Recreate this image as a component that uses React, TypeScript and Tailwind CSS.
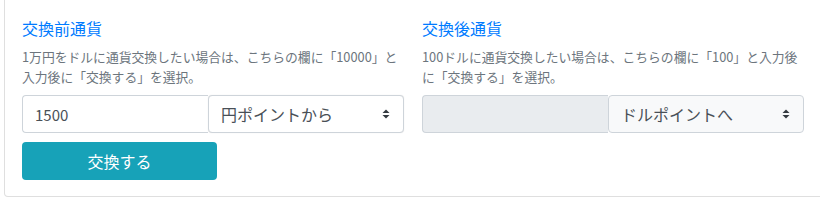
const SelectArrows = () => (
  <svg width="8" height="12" viewBox="0 0 8 12" className="shrink-0">
    <path d="M4 1.5 L7.5 5 H0.5 Z" fill="#343a40" />
    <path d="M4 10.5 L7.5 7 H0.5 Z" fill="#343a40" />
  </svg>
);

interface ColumnProps {
  title: string;
  description: string;
  value: string;
  disabled?: boolean;
  option: string;
  showButton?: boolean;
}

const Column = ({ title, description, value, disabled, option, showButton }: ColumnProps) => (
  <div className="w-[382px] shrink-0">
    <h3 className="text-[16px] leading-6 text-[#007bff] font-normal">{title}</h3>
    <p className="mt-[7px] text-[12.8px] leading-5 text-[#6c757d]">{description}</p>
    <div className="mt-2 flex h-[38px]">
      <input
        className={
          disabled
            ? 'w-[186px] h-full border border-[#ced4da] border-r-0 rounded-l bg-[#e9ecef] px-3 text-[16px] text-[#495057] outline-none'
            : 'w-[186px] h-full border border-[#ced4da] border-r-0 rounded-l bg-white px-3 text-[15px] text-[#495057] outline-none'
        }
        value={value}
        disabled={disabled}
        readOnly
      />
      <div
        className={
          disabled
            ? 'flex-1 h-full flex items-center justify-between border border-[#ced4da] rounded bg-[#f8f9fa] pl-3 pr-[13px] text-[16px] text-[#495057]'
            : 'flex-1 h-full flex items-center justify-between border border-[#ced4da] rounded bg-white pl-3 pr-[13px] text-[16px] text-[#495057] shadow-[0_0_1px_rgba(0,0,0,0.15)]'
        }
      >
        <span>{option}</span>
        <SelectArrows />
      </div>
    </div>
    {showButton && (
      <button className="mt-[9px] w-[195px] h-[38px] rounded bg-[#17a2b8] text-white text-[16px]">
        交換する
      </button>
    )}
  </div>
);

export default function App() {
  return (
    <div
      className="w-[820px] h-[203px] overflow-hidden bg-white"
      style={{ fontFamily: '"Noto Sans CJK JP", "Noto Sans", sans-serif' }}
    >
      <div className="ml-1 w-[830px] border-l border-b border-r border-[#dfdfdf] rounded-b pl-[17px] pt-4 pb-4 flex gap-[18px]">
        <Column
          title="交換前通貨"
          description="1万円をドルに通貨交換したい場合は、こちらの欄に「10000」と入力後に「交換する」を選択。"
          value="1500"
          option="円ポイントから"
          showButton
        />
        <Column
          title="交換後通貨"
          description="100ドルに通貨交換したい場合は、こちらの欄に「100」と入力後に「交換する」を選択。"
          value=""
          disabled
          option="ドルポイントへ"
        />
      </div>
    </div>
  );
}
